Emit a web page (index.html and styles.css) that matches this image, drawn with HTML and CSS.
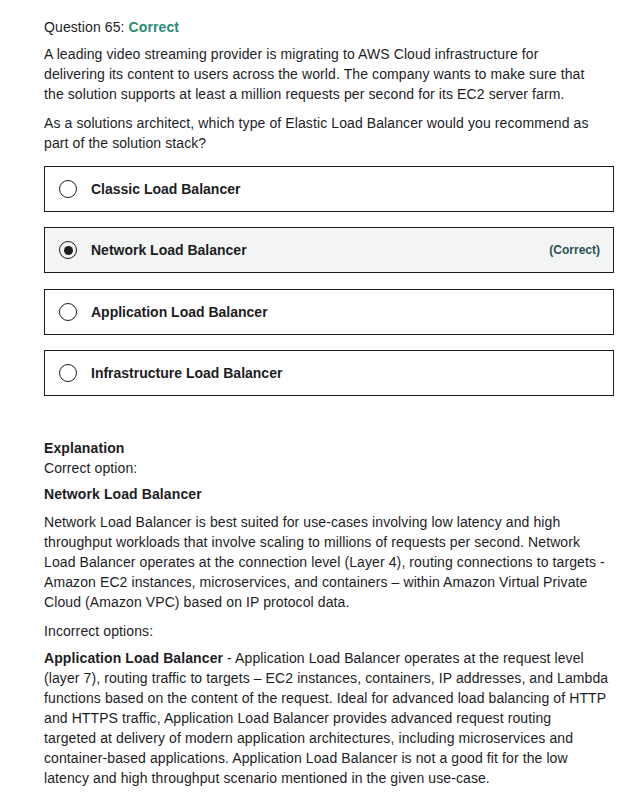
FILE: index.html
```html
<!DOCTYPE html>
<html lang="en">
<head>
<meta charset="utf-8">
<title>Question 65</title>
<link rel="stylesheet" href="styles.css">
</head>
<body>
<div class="page">
  <div class="q-title">Question 65: <span class="status">Correct</span></div>
  <p class="para">A leading video streaming provider is migrating to AWS Cloud infrastructure for<br>delivering its content to users across the world. The company wants to make sure that<br>the solution supports at least a million requests per second for its EC2 server farm.</p>
  <p class="para">As a solutions architect, which type of Elastic Load Balancer would you recommend as<br>part of the solution stack?</p>

  <div class="options">
    <div class="option">
      <span class="radio"></span>
      <span class="label">Classic Load Balancer</span>
    </div>
    <div class="option selected">
      <span class="radio checked"></span>
      <span class="label">Network Load Balancer</span>
      <span class="tag">(Correct)</span>
    </div>
    <div class="option">
      <span class="radio"></span>
      <span class="label">Application Load Balancer</span>
    </div>
    <div class="option">
      <span class="radio"></span>
      <span class="label">Infrastructure Load Balancer</span>
    </div>
  </div>

  <div class="explanation">
    <div class="ex-title">Explanation</div>
    <div class="ex-sub">Correct option:</div>
    <p class="para tight strong">Network Load Balancer</p>
    <p class="para">Network Load Balancer is best suited for use-cases involving low latency and high<br>throughput workloads that involve scaling to millions of requests per second. Network<br>Load Balancer operates at the connection level (Layer 4), routing connections to targets -<br>Amazon EC2 instances, microservices, and containers – within Amazon Virtual Private<br>Cloud (Amazon VPC) based on IP protocol data.</p>
    <p class="para tighter">Incorrect options:</p>
    <p class="para"><b>Application Load Balancer</b> - Application Load Balancer operates at the request level<br>(layer 7), routing traffic to targets – EC2 instances, containers, IP addresses, and Lambda<br>functions based on the content of the request. Ideal for advanced load balancing of HTTP<br>and HTTPS traffic, Application Load Balancer provides advanced request routing<br>targeted at delivery of modern application architectures, including microservices and<br>container-based applications. Application Load Balancer is not a good fit for the low<br>latency and high throughput scenario mentioned in the given use-case.</p>
  </div>
</div>
</body>
</html>
```

FILE: styles.css
```css
html, body {
  margin: 0;
  padding: 0;
  background: #ffffff;
}
body {
  font-family: "Liberation Sans", Arial, sans-serif;
  font-size: 14px;
  line-height: 20px;
  letter-spacing: 0.1px;
  color: #1c1d1f;
}
.page {
  width: 570px;
  padding: 17px 0 0 44px;
}
.q-title {
  margin-bottom: 7px;
}
.status {
  font-weight: bold;
  color: #2a8b72;
}
.para {
  margin: 0 0 9px 0;
  white-space: nowrap;
}
.para.tight {
  margin-bottom: 8px;
}
.para.tighter {
  margin-bottom: 7px;
}
.para b, .strong {
  font-weight: bold;
}
.options {
  display: flex;
  flex-direction: column;
  gap: 15.3px;
  margin-top: 13px;
}
.option {
  display: flex;
  align-items: center;
  height: 44px;
  border: 1px solid #1c1d1f;
  padding: 0 13px 0 14px;
}
.option.selected {
  background: #f2f5f4;
}
.radio {
  width: 16px;
  height: 16px;
  border: 1px solid #1c1d1f;
  border-radius: 50%;
  margin-right: 14px;
  display: flex;
  align-items: center;
  justify-content: center;
  flex: none;
}
.radio.checked::after {
  content: "";
  width: 9px;
  height: 9px;
  border-radius: 50%;
  background: #1c1d1f;
}
.label {
  font-weight: bold;
  font-size: 14px;
  letter-spacing: 0;
  flex: 1;
}
.tag {
  font-size: 12px;
  font-weight: bold;
  letter-spacing: 0;
  color: #2d4f57;
}
.explanation {
  margin-top: 42px;
}
.ex-title {
  font-weight: bold;
}
.ex-sub {
  margin-bottom: 6px;
}
```
